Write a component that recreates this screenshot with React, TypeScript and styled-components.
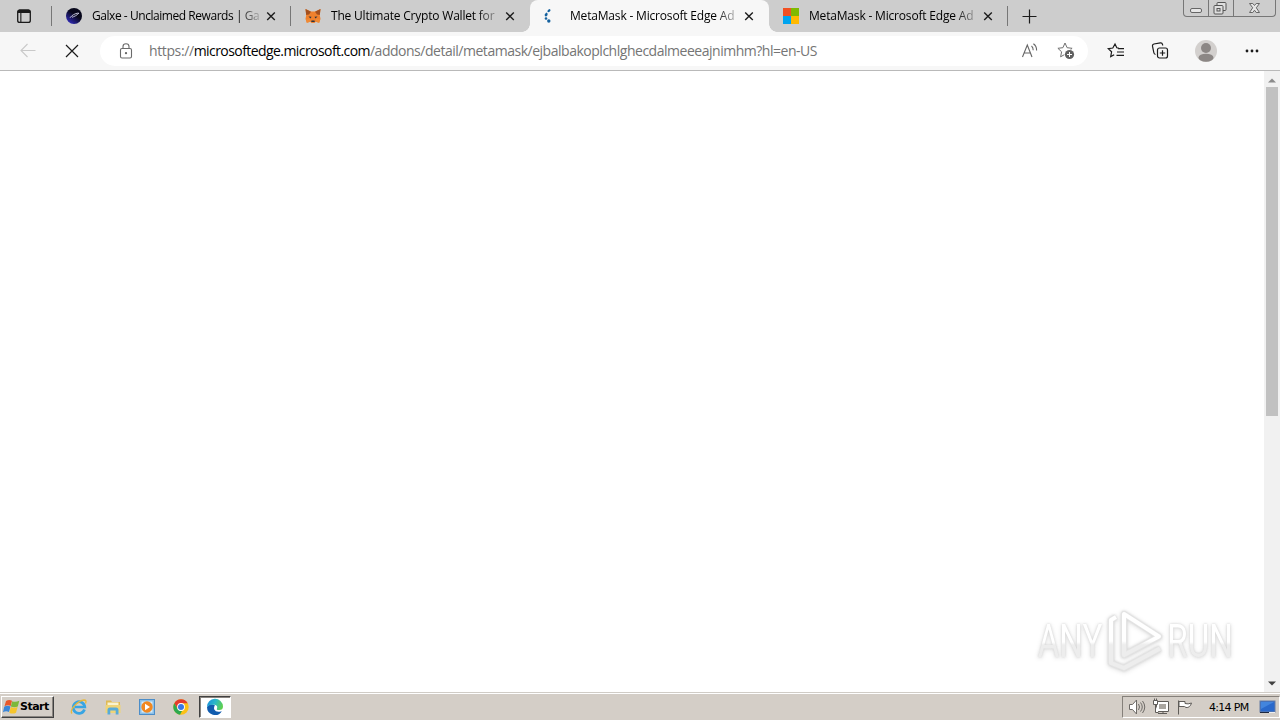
import React from 'react'
import styled, { createGlobalStyle, css } from 'styled-components'

const url = {
  scheme: 'https://',
  host: 'microsoftedge.microsoft.com',
  path: '/addons/detail/metamask/ejbalbakoplchlghecdalmeeeajnimhm?hl=en-US',
}

const tabs = [
  { id: 1, title: 'Galxe - Unclaimed Rewards | Ga', icon: 'galxe', spacing: -0.45 },
  { id: 2, title: 'The Ultimate Crypto Wallet for', icon: 'fox', spacing: -0.2 },
  { id: 3, title: 'MetaMask - Microsoft Edge Ad', icon: 'spinner', spacing: -0.18, active: true },
  { id: 4, title: 'MetaMask - Microsoft Edge Ad', icon: 'microsoft', spacing: -0.18 },
]

const TabIcon = ({ name }: { name: string }) => {
  if (name === 'galxe') {
    return (
      <svg width="16" height="16" viewBox="0 0 16 16">
        <defs>
          <linearGradient id="galxe" x1="0" y1="1" x2="0.6" y2="0.2">
            <stop offset="0" stopColor="#3a32e0" />
            <stop offset="0.8" stopColor="#08081c" />
          </linearGradient>
        </defs>
        <circle cx="8" cy="8" r="8" fill="url(#galxe)" />
        <path d="M4 9.800C6 7 9 5.500 12.500 5M6 9.300C8 8.500 11 7.500 13 5" stroke="#cfd0e8" strokeWidth="0.9" fill="none" />
      </svg>
    )
  }
  if (name === 'fox') {
    return (
      <svg width="16" height="16" viewBox="0 0 16 16">
        <path d="M.5 1l5.500 2.500h4L15.500 1l-.7 6 .7 4-1.300 3.700-3.500-1L9.500 15h-3l-1.200-1.300-3.500 1L.5 11l.7-4z" fill="#ef812d" />
        <path d="M.5 1l5.500 2.700L4 6.500 1.200 7zM15.500 1L10 3.700l2 2.800 2.800.5z" fill="#a3501f" />
        <path d="M3.500 8.500l3 .3-1 1.800zM12.500 8.500l-3 .3 1 1.800zM6.500 12.500h3l.3 1.500H6.200z" fill="#2b3442" />
        <path d="M1 11.200l4-.2.3 2.700-3.500 1zM15 11.200l-4-.2-.3 2.700 3.500 1z" fill="#ef8a35" />
      </svg>
    )
  }
  if (name === 'spinner') {
    return (
      <svg width="16" height="16" viewBox="0 0 16 16" fill="#15629f">
        <path d="M5.500 1q2 1 0 2.800-1.700.9-2.100-.5 0-1.500 2.100-2.300z" />
        <path d="M2.300 4.500q2 .6 1 3-1.200 1.600-2.500.5Q0 6 2.300 4.500z" />
        <circle cx="2" cy="10.500" r="1.300" />
        <circle cx="4.800" cy="13" r="1.700" />
      </svg>
    )
  }
  return (
    <svg width="16" height="16" viewBox="0 0 16 16">
      <path fill="#f25022" d="M0 0h8v8H0z" />
      <path fill="#7fba00" d="M8 0h8v8H8z" />
      <path fill="#00a4ef" d="M0 8h8v8H0z" />
      <path fill="#ffb900" d="M8 8h8v8H8z" />
    </svg>
  )
}

const CloseIcon = () => (
  <svg width="12" height="12" viewBox="0 0 12 12">
    <path d="M2.200 2.500l7.600 7.600M9.800 2.500l-7.600 7.600" stroke="#1c1c1c" strokeWidth="1.400" />
  </svg>
)

const TabStrip = () => (
  <Strip>
    <TabActions>
      <svg width="16" height="16" viewBox="0 0 16 16">
        <rect x="1.700" y="2.200" width="12.600" height="12.200" rx="2" fill="none" stroke="#1b1b1b" strokeWidth="1.300" />
        <path d="M1.500 5V3.500q0-2 2-2h9q2 0 2 2V5zM4.300 5h1.100v9H4.300z" fill="#1b1b1b" />
      </svg>
    </TabActions>
    {tabs.map(tab => (
      <Tab key={tab.id} $active={tab.active} $divider={tab.id === 1 || tab.id === 4}>
        <TabIcon name={tab.icon} />
        <TabTitle $spacing={tab.spacing}>{tab.title}</TabTitle>
        <CloseIcon />
      </Tab>
    ))}
    <NewTab>
      <svg width="15" height="15" viewBox="0 0 15 15">
        <path d="M7.500.5v14M.5 7.500h14" stroke="#1b1b1b" strokeWidth="1.200" />
      </svg>
    </NewTab>
    <WindowControls>
      <Control $width={24}>
        <svg width="24" height="16" viewBox="0 0 24 16">
          <rect x="6.500" y="8.500" width="11" height="4" rx="1.500" fill="#e6e6e6" stroke="#666" />
        </svg>
      </Control>
      <Control $width={25}>
        <svg width="24" height="16" viewBox="0 0 24 16" fill="#dedede" stroke="#555">
          <rect x="8" y="2.500" width="9" height="8" rx="1" />
          <rect x="5" y="5.500" width="9" height="8.500" rx="1" />
          <rect x="8" y="8.500" width="3" height="2.500" />
        </svg>
      </Control>
      <Control $width={42}>
        <svg width="40" height="16" viewBox="0 0 40 16">
          <path d="M15.500 3.500h3.300l1.700 2 1.700-2h3.300l-3.200 4.300 3.200 4.700h-3.300l-1.700-2.300-1.700 2.300h-3.300l3.200-4.700z" fill="#e6e6e6" stroke="#666" />
        </svg>
      </Control>
    </WindowControls>
  </Strip>
)

const starPath = 'M8 1l2.100 4.700 5 .6-3.700 3.500 1 5L8 12.300l-4.400 2.500 1-5L.9 6.300l5-.6z'

const Toolbar = () => (
  <Bar>
    <NavButtons>
      <svg width="16" height="16" viewBox="0 0 16 16" fill="none" stroke="#c9c9c9" strokeWidth="1.100">
        <path d="M15.500 7.500H1M7.500 1L1 7.500 7.500 14" />
      </svg>
      <svg width="14" height="14" viewBox="0 0 14 14" fill="none" stroke="#1b1b1b" strokeWidth="1.200">
        <path d="M1 1l12 12M13 1L1 13" />
      </svg>
    </NavButtons>
    <AddressBar>
      <svg width="14" height="17" viewBox="0 0 14 17" fill="none" stroke="#6a6a6a" strokeWidth="1.100">
        <rect x="1.500" y="5.500" width="11" height="9.500" rx="1.500" />
        <path d="M4 5.500V3.500q0-2.800 3-2.800t3 2.800v2" />
        <circle cx="7" cy="10.200" r=".6" fill="#6a6a6a" />
      </svg>
      <Url>
        <UrlPart $spacing={-0.38}>{url.scheme}</UrlPart>
        <UrlPart $spacing={-0.57} $strong>
          {url.host}
        </UrlPart>
        <UrlPart $spacing={-0.48}>{url.path}</UrlPart>
      </Url>
      <AddressActions>
        <svg width="18" height="18" viewBox="0 0 18 18" fill="none" stroke="#666" strokeWidth="1.100">
          <path d="M1.500 15L6.300 3 11 15M3.200 11h6.300M10.500 4q1.700 1.500 1.700 4.200M12.400 1.800q3.300 2.300 3.200 6.700" />
        </svg>
        <svg width="18" height="18" viewBox="0 0 18 18">
          <path d={starPath} fill="none" stroke="#707070" />
          <circle cx="12.500" cy="12.500" r="5.200" fill="#fff" />
          <circle cx="12.500" cy="12.500" r="4.600" fill="#606060" />
          <path d="M12.500 10v5M10 12.500h5" stroke="#fff" />
        </svg>
      </AddressActions>
    </AddressBar>
    <BrowserActions>
      <svg width="18" height="18" viewBox="0 0 18 18" fill="none" stroke="#1b1b1b" strokeWidth="1.200">
        <path d="M11.800 6.100l-2-.3L8 2 5.800 6l-4.500.6 3.300 3.200-.9 4.800 3.500-1.800M11 6.600h6M10 10h7M9.500 13.400H17" />
      </svg>
      <svg width="18" height="18" viewBox="0 0 18 18" fill="none" stroke="#1b1b1b" strokeWidth="1.200">
        <rect x="6.500" y="6" width="10" height="10" rx="2" />
        <path d="M11.500 8.300v5.400M8.800 11h5.400M4.500 12.500Q3 12 2.800 10.500L1.500 4.200q-.3-1.800 1.400-2.200l6.500-1.200q1.700-.2 2.100 1.500l.2 1.200" />
      </svg>
      <svg width="22" height="22" viewBox="0 0 22 22">
        <circle cx="11" cy="11" r="11" fill="#d3d0ce" />
        <circle cx="11" cy="8" r="5" fill="#8c8785" />
        <ellipse cx="11" cy="17.700" rx="7.500" ry="4" fill="#8c8785" />
      </svg>
      <svg width="14" height="4" viewBox="0 0 14 4" fill="#1b1b1b">
        <circle cx="2" cy="2" r="1.400" />
        <circle cx="7" cy="2" r="1.400" />
        <circle cx="12" cy="2" r="1.400" />
      </svg>
    </BrowserActions>
  </Bar>
)

const Watermark = () => (
  <Mark>
    <MarkText>ANY</MarkText>
    <svg width="58" height="64" viewBox="0 0 58 64" fill="none" strokeLinejoin="round">
      <defs>
        <linearGradient id="mark" gradientUnits="userSpaceOnUse" x1="0" y1="0" x2="0" y2="64">
          <stop offset="0.5" stopColor="#fff" />
          <stop offset="0.56" stopColor="#ededed" />
        </linearGradient>
      </defs>
      <g stroke="#e4e4e4" strokeWidth="6">
        <path d="M18 5v41l35-18.500zM10 8l-5 3v43l13 5 36-19.500" />
      </g>
      <g stroke="url(#mark)" strokeWidth="4">
        <path d="M18 5v41l35-18.500zM10 8l-5 3v43l13 5 36-19.500" />
      </g>
    </svg>
    <MarkText>RUN</MarkText>
  </Mark>
)

const Page = () => (
  <Viewport>
    <Document>
      <Watermark />
    </Document>
    <Scrollbar>
      <ScrollArrow>
        <svg width="8" height="5" viewBox="0 0 8 5">
          <path d="M0 4.500L4 .5l4 4z" fill="#8b8b8b" />
        </svg>
      </ScrollArrow>
      <Thumb />
      <ScrollArrow>
        <svg width="8" height="5" viewBox="0 0 8 5">
          <path d="M0 .5h8l-4 4z" fill="#404040" />
        </svg>
      </ScrollArrow>
    </Scrollbar>
  </Viewport>
)

const Taskbar = () => (
  <Tasks>
    <StartButton>
      <svg width="17" height="16" viewBox="0 0 17 16">
        <path d="M3 2q3-2 6-.3L7.700 7Q4.700 5.500 1.500 7.300z" fill="#e8582a" />
        <path d="M9.300 2.200q3 1.500 7-.4L14.800 7.500q-3.300 1.500-7 0z" fill="#7db83a" />
        <path d="M1.200 7.800Q4.400 6 7.500 7.500L6 13Q3 11.500 0 13.200z" fill="#3a86d8" />
        <path d="M7.800 8q3.400 1.500 6.800 0L13 13.700q-3.500 1.700-6.700 0z" fill="#f6c52c" />
      </svg>
      Start
    </StartButton>
    <Launchers>
      <Launcher>
        <svg width="18" height="18" viewBox="0 0 18 18" fill="none">
          <path d="M14.500 11.500A5.800 5.800 0 1 1 14.800 9H5" stroke="#38a5e3" strokeWidth="2.700" />
          <path d="M2 15.500C-1 12 8 2.500 14 2q3 0 1.500 3.500" stroke="#e7b83b" strokeWidth="1.300" />
        </svg>
      </Launcher>
      <Launcher>
        <svg width="18" height="18" viewBox="0 0 18 18">
          <path d="M2 2.500h5L8 4h8v10H2z" fill="#dfba55" />
          <path d="M3.500 4.500h11v4h-11z" fill="#f9f3cf" />
          <path d="M1.500 7H16.500v8h-15z" fill="#efd478" />
          <path d="M3.500 16.500V12q0-2.500 2.500-2.500h6q2.500 0 2.500 2.500v4.500h-2.800v-4H6.300v4z" fill="#58abd8" />
        </svg>
      </Launcher>
      <Launcher>
        <svg width="18" height="18" viewBox="0 0 18 18">
          <rect x="1.500" y="1.500" width="15" height="15" fill="#8bc0e8" stroke="#4c8dc8" />
          <rect x="3.500" y="3.500" width="11" height="11" fill="#d8ecf9" />
          <circle cx="9" cy="9" r="5.700" fill="#f18821" />
          <path d="M7 5.800L12 9l-5 3.200z" fill="#fff" />
        </svg>
      </Launcher>
      <Launcher>
        <svg width="18" height="18" viewBox="0 0 18 18">
          <circle cx="9" cy="9" r="7.700" fill="#fbc116" />
          <path d="M2.300 5.200A7.700 7.700 0 0 1 15.700 5.200H9L5.700 11z" fill="#e33b2e" />
          <path d="M2.300 5.200L5.700 11q1.500 2 4.300 2l-2 3.700A7.700 7.700 0 0 1 2.300 5.200z" fill="#2da94f" />
          <circle cx="9" cy="9" r="3.900" fill="#fff" />
          <circle cx="9" cy="9" r="3" fill="#3978e6" />
        </svg>
      </Launcher>
      <Launcher $pressed>
        <svg width="18" height="18" viewBox="0 0 18 18">
          <defs>
            <linearGradient id="edge" x1="0" y1="0.2" x2="1" y2="0.5">
              <stop offset="0" stopColor="#1b8fdc" />
              <stop offset="0.5" stopColor="#2bb8c8" />
              <stop offset="1" stopColor="#5fd04f" />
            </linearGradient>
          </defs>
          <path d="M1 9a8 8 0 0 0 14.800 4.200Q10 15 8.300 11.500 7.500 9 9 7.500 4 4.500 1 9z" fill="#125cae" />
          <path d="M1 9a8 8 0 0 1 16-.5q0 3.500-3.800 3.500-3.200 0-2.200-1.500 1-3-2.500-3.700Q3.500 6 1 9z" fill="url(#edge)" />
        </svg>
      </Launcher>
    </Launchers>
    <Tray>
      <svg width="18" height="18" viewBox="0 0 18 18" fill="none" stroke="#6d6a66">
        <path d="M1.500 6.500h3L8.500 2v14l-4-4.500h-3z" fill="#fff" />
        <path d="M10.500 6q2 3 0 6M12.500 4.500q3.500 4.500 0 9M14.500 3q4.500 6 0 12" />
      </svg>
      <svg width="18" height="18" viewBox="0 0 18 18" fill="none" stroke="#5f5c58">
        <path d="M5.500 4.500h10v8h-10z" fill="#aaa6a0" stroke="#fff" strokeWidth="3" />
        <path d="M4.500 3.500h12v10h-12zM6 15.500h9M11 14v2" />
        <path d="M1.500 2.500h4v4h-4zM2.500 2V.5M4.500 2V.5M3.500 7v7.500h3" fill="#fff" />
      </svg>
      <svg width="18" height="18" viewBox="0 0 18 18" stroke="#5f5c58">
        <path d="M2.500 2.500v14M3 3.500h6v2q3 1 6.500-.5-1.500 5-5.500 4.500L8.500 8.500H3z" fill="#fff" />
      </svg>
      <Clock>4:14 PM</Clock>
      <svg width="17" height="14" viewBox="0 0 17 14">
        <rect x="1" y="1" width="15" height="11" fill="#2a69cb" stroke="#667da3" />
        <path d="M2 2h13L2 9z" fill="#4385dd" />
        <path d="M1 12.500h9" stroke="#1d2840" />
        <path d="M10 12.500h6" stroke="#eee" />
      </svg>
    </Tray>
  </Tasks>
)

export default function App() {
  return (
    <Desktop>
      <GlobalStyle />
      <TabStrip />
      <Toolbar />
      <Page />
      <Taskbar />
    </Desktop>
  )
}

const GlobalStyle = createGlobalStyle`
  * {
    box-sizing: border-box;
  }

  body {
    margin: 0;
    overflow: hidden;
  }

  svg {
    display: block;
    flex: none;
  }
`

const Desktop = styled.div`
  display: flex;
  flex-direction: column;
  width: 1280px;
  height: 720px;
  background: #fff;
  font-family: 'Open Sans', 'Noto Sans', sans-serif;
`

const Strip = styled.div`
  display: flex;
  height: 32px;
  background: #cdcdcd;
`

const TabActions = styled.div`
  display: flex;
  align-items: center;
  width: 52px;
  padding-left: 16px;
  background: linear-gradient(#777, #777) right 6px / 1px 20px no-repeat;
`

const Tab = styled.div<{ $active?: boolean; $divider?: boolean }>`
  position: relative;
  display: flex;
  align-items: center;
  width: 239px;
  padding-left: 14px;

  ${({ $divider }) =>
    $divider &&
    css`
      background: linear-gradient(#777, #777) right 6px / 1px 20px no-repeat;
    `}

  ${({ $active }) =>
    $active &&
    css`
      background: #f7f7f7;
      border-radius: 8px 8px 0 0;

      /* flared bottom corners */
      &::before,
      &::after {
        content: '';
        position: absolute;
        bottom: 0;
        width: 8px;
        height: 8px;
      }

      &::before {
        left: -8px;
        background: radial-gradient(circle at 0 0, transparent 7.5px, #f7f7f7 8px);
      }

      &::after {
        right: -8px;
        background: radial-gradient(circle at 100% 0, transparent 7.5px, #f7f7f7 8px);
      }
    `}
`

const TabTitle = styled.span<{ $spacing: number }>`
  width: 168px;
  margin: 0 5px 0 10px;
  color: #000;
  font-size: 12px;
  line-height: 16px;
  letter-spacing: ${({ $spacing }) => $spacing}px;
  white-space: nowrap;
  mask-image: linear-gradient(to right, #000 146px, transparent 172px);
`

const NewTab = styled.div`
  display: flex;
  align-items: center;
  padding-left: 14px;
`

const WindowControls = styled.div`
  display: flex;
  height: 17px;
  margin: 0 4px 0 auto;
  border: solid #777;
  border-width: 0 1px 1px;
  border-radius: 0 0 4px 4px;
`

const Control = styled.div<{ $width: number }>`
  width: ${({ $width }) => $width}px;

  & + & {
    border-left: 1px solid #777;
  }
`

const Bar = styled.div`
  display: flex;
  align-items: center;
  height: 39px;
  background: #f7f7f7;
  border-bottom: 1px solid #b9b9b9;
`

const NavButtons = styled.div`
  display: flex;
  align-items: center;
  gap: 29px;
  width: 100px;
  padding-left: 20px;
`

const AddressBar = styled.div`
  display: flex;
  align-items: center;
  width: 988px;
  height: 30px;
  padding: 0 13px 0 19px;
  background: #fff;
  border-radius: 15px;
`

const Url = styled.div`
  display: flex;
  margin-left: 16px;
  font-size: 14px;
  line-height: 20px;
`

const UrlPart = styled.span<{ $spacing: number; $strong?: boolean }>`
  color: ${({ $strong }) => ($strong ? '#000' : '#757575')};
  letter-spacing: ${({ $spacing }) => $spacing}px;
  white-space: nowrap;
`

const AddressActions = styled.div`
  display: flex;
  gap: 18px;
  margin-left: auto;
`

const BrowserActions = styled.div`
  display: flex;
  flex: 1;
  align-items: center;
  justify-content: space-between;
  padding: 0 21px 0 19px;

  svg:nth-child(2),
  svg:nth-child(3) {
    margin: 0 1px 0 -1px;
  }
`

const Viewport = styled.div`
  display: flex;
  height: 621px;
`

const Document = styled.div`
  display: flex;
  flex: 1;
  align-items: flex-end;
  justify-content: flex-end;
  padding: 0 18px 19px 0;
`

const Mark = styled.div`
  display: flex;
  align-items: center;
  filter: drop-shadow(0 0 1px #d4d4d4) drop-shadow(0 1px 2px #e2e2e2);

  svg {
    margin: 0 -10px;
  }
`

const MarkText = styled.span`
  display: flex;
  justify-content: center;
  width: 92px;
  color: transparent;
  font: 46px/58px Roboto, sans-serif;
  background: linear-gradient(#fff 30px, #ededed 33px);
  background-clip: text;
  transform: scaleX(0.72);
`

const Scrollbar = styled.div`
  display: flex;
  flex-direction: column;
  align-items: center;
  width: 16px;
  background: #f1f1f1;
`

const ScrollArrow = styled.div`
  display: flex;
  align-items: center;
  justify-content: center;
  height: 16px;
  padding-top: 2px;

  &:last-child {
    margin-top: auto;
    padding: 0 0 2px;
  }
`

const Thumb = styled.div`
  width: 12px;
  height: 329px;
  background: #c1c1c1;
`

const Tasks = styled.div`
  display: flex;
  align-items: center;
  height: 28px;
  padding-left: 1px;
  background: #d4cec7;
  border-top: 1px solid #d0ccc6;
  box-shadow: inset 0 1px #fff;
`

const StartButton = styled.div`
  display: flex;
  align-items: center;
  width: 53px;
  height: 22px;
  padding-left: 1px;
  border: 1px solid;
  border-color: #fff #404040 #404040 #fff;
  box-shadow: inset -1px -1px #8a8580;
  color: #000;
  font: bold 11px 'DejaVu Sans', sans-serif;
  letter-spacing: -0.5px;
`

const Launchers = styled.div`
  display: flex;
  gap: 2px;
  margin-left: 9px;
`

const Launcher = styled.div<{ $pressed?: boolean }>`
  display: flex;
  align-items: center;
  justify-content: center;
  width: 32px;
  height: 22px;

  ${({ $pressed }) =>
    $pressed &&
    css`
      background: #fff;
      border: 1px solid;
      border-color: #404040 #fff #fff #404040;
      box-shadow: inset 1px 1px #8a8580;
    `}
`

const Tray = styled.div`
  display: flex;
  align-items: center;
  gap: 6px;
  width: 158px;
  height: 22px;
  margin-left: auto;
  padding-left: 5px;
  border: 1px solid;
  border-color: #85807a #fff #fff #85807a;
`

const Clock = styled.span`
  width: 43px;
  margin: 2px 1px 0 9px;
  color: #000;
  font: 11px 'DejaVu Sans', sans-serif;
  letter-spacing: -0.7px;
  white-space: nowrap;
`
